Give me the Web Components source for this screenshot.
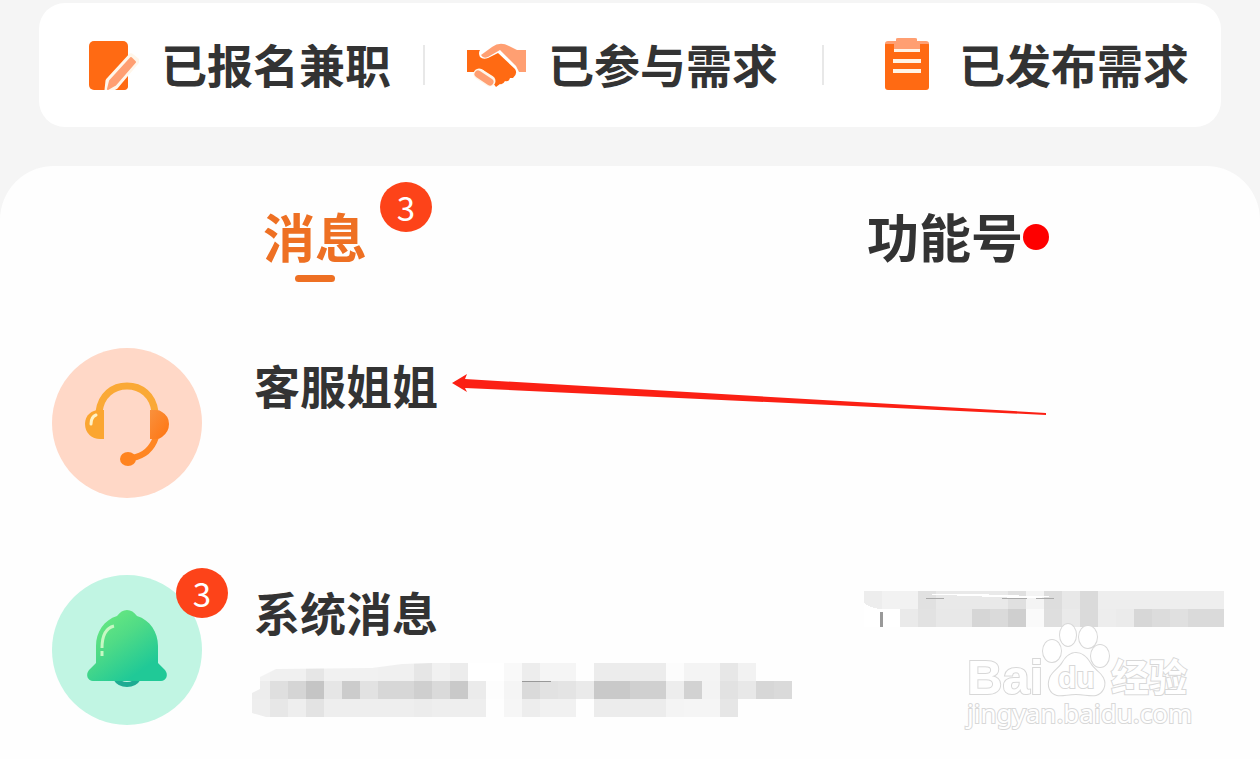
<!DOCTYPE html>
<html lang="zh-CN">
<head>
<meta charset="utf-8">
<meta name="viewport" content="width=device-width, initial-scale=1">
<title>消息</title>
<style>
  body { margin: 0; background: #f5f5f5; color: #333; font-family: "Noto Sans CJK SC", sans-serif; }
</style>
</head>
<body>
<message-page></message-page>

<script>
const define = (name, html, setup) => customElements.define(name, class extends HTMLElement {
  constructor() {
    super();
    const t = document.createElement('template');
    t.innerHTML = html;
    this.attachShadow({ mode: 'open' }).append(t.content.cloneNode(true));
  }
  connectedCallback() { if (setup) setup(this, this.shadowRoot); }
});

const ICONS = {
  apply: `<svg viewBox="-3 0 60 60"><rect x="7" y="6" width="39" height="49" rx="5" fill="#ff6a13"/>
    <path d="M49 22 54 26 33 51 26 55 27 46Z" fill="#fff6ea" stroke="#fff6ea" stroke-width="7" stroke-linejoin="round"/>
    <path d="M20 55H44L40 60H18Z" fill="#fff"/><path d="M36 55 46 43V51Q46 55 42 55Z" fill="#ff6a13"/>
    <path d="M49 23 53 27 33 50 26 54 28 46Z" fill="#ff9f72" stroke="#ff9f72" stroke-width="2" stroke-linejoin="round"/></svg>`,
  join: `<svg viewBox="0 0 60 60"><path d="M15 20 26 12Q34 6 43 11L51 15H60V37H53L50 31 34 15 22 22Q17 24 15 20Z" fill="#ff9f72"/>
    <path d="M1 15H14Q12 18 14 22 17 25 22 23L32 18 49 34Q52 39 47 43L44 43Q43 47 39 46 37 50 34 49L30 52 27 48 26 43 17 35Q12 33 9 37H1Z" fill="#ff6a13"/>
    <path d="M13 39 24 46" fill="none" stroke="#fff6ea" stroke-width="11" stroke-linecap="round"/>
    <path d="M12 39 24 47" fill="none" stroke="#ff9f72" stroke-width="7" stroke-linecap="round"/></svg>`,
  publish: `<svg viewBox="0 0 60 60"><rect x="8" y="7" width="44" height="48" rx="3" fill="#ff6a13"/>
    <path d="M17 14H43V17H17ZM16 24H44V28H16ZM16 34H44V38H16Z" fill="#fff4e8"/>
    <path d="M8 9Q8 6 11 6H19V4Q19 3 21 3H38Q40 3 40 4V6H49Q52 6 52 9H43V14H17V9Z" fill="#ff9f72"/></svg>`,
  service: `<svg viewBox="0 0 150 150"><defs><linearGradient id="o" x1="0" x2="1" y1="0" y2="1"><stop offset="0" stop-color="#f9913d"/><stop offset="1" stop-color="#ff7410"/></linearGradient></defs>
    <circle cx="75" cy="75" r="75" fill="#ffd8c7"/>
    <path d="M47 64C49 47 61 38 75 38S101 47 103 64" fill="none" stroke="#faa936" stroke-width="7"/>
    <path d="M104 89Q98 107 80 110" fill="none" stroke="#ff8623" stroke-width="6"/>
    <path d="M52 62V91H48C40 91 33 85 33 76S40 62 47 62Z" fill="#fba631"/>
    <path d="M98 62V91H104Q108 91 110 89 117 84 117 76T110 64Q108 62 104 62Z" fill="url(#o)"/>
    <ellipse cx="76" cy="111" rx="8" ry="7" fill="#ff8420"/>
    <path d="M39 76Q39 69 44 67" fill="none" stroke="#fff2c6" stroke-width="3" stroke-linecap="round"/></svg>`,
  system: `<svg viewBox="0 0 150 150"><defs><linearGradient id="g" x1=".25" x2=".75" y1=".15" y2=".8"><stop offset="0" stop-color="#62e582"/><stop offset=".35" stop-color="#50db86"/><stop offset="1" stop-color="#20c997"/></linearGradient></defs>
    <circle cx="75" cy="75" r="75" fill="#c1f5e3"/>
    <path d="M64 104A12 9 0 0 0 86 104" fill="none" stroke="#1eab92" stroke-width="5"/>
    <path d="M75 35C79 35 82 37 85 41C98 45 106 57 106 71V88L113 95C117 100 114 106 109 106H41C36 106 33 100 37 95L44 88V71C44 57 52 45 65 41C68 37 71 35 75 35Z" fill="url(#g)"/>
    <path d="M62 51Q50 54 50 73M50 76V81" fill="none" stroke="#c7f8c3" stroke-width="3"/></svg>`
};

/* A censored strip: each cell is [columns, grey level], each column 18px wide. */
const MOSAICS = {
  preview: { w: 540, h: 54, clip: 'M8 14 24 6 120 5 150 1 180 0H540V54H14L0 50V30L8 26Z',
    rows: [
      [[1,'f3'],[2,'f0'],[1,'e6'],[3,'f1'],[2,'f0'],[1,'e6'],[1,'f1'],[1,'ec'],[1,'ff'],[1,'ff'],[1,'f9'],[1,'ed'],[2,'f5'],[1,'fe'],[4,'ec'],[1,'fc'],[2,'f4'],[1,'e7'],[1,'f2']],
      [[1,'ed'],[1,'df'],[1,'d5'],[1,'c5'],[1,'e6'],[1,'cc'],[1,'e2'],[2,'d7'],[1,'cf'],[1,'da'],[1,'c9'],[1,'eb'],[1,'fd'],[1,'f5'],[1,'da'],[1,'e2'],[1,'e4'],[1,'ea'],[2,'c9'],[2,'d0'],[1,'ed'],[1,'d2'],[1,'f3'],[1,'e2'],[1,'e8'],[1,'d7'],[1,'da']],
      [[1,'ee'],[1,'e7'],[1,'ee'],[1,'e3'],[5,'ee'],[1,'ec'],[3,'ee'],[1,'fe'],[1,'f6'],[1,'ed'],[2,'f1'],[1,'fe'],[4,'ec'],[1,'f4'],[2,'f5'],[1,'e6']]
    ], extra: '<path d="M270 18H299" stroke="#999"/>' },
  time: { w: 360, h: 36, clip: 'M0 0H360V36H0Z',
    rows: [
      [[1,'ed'],[2,'f2'],[1,'e1'],[4,'e9'],[1,'e0'],[1,'f4'],[1,'dd'],[1,'e8'],[1,'da'],[7,'ee']],
      [[2,'ff'],[1,'ea'],[1,'e2'],[2,'e8'],[1,'d6'],[1,'da'],[1,'cf'],[1,'fa'],[1,'de'],[1,'ea'],[1,'da'],[1,'ed'],[1,'eb'],[1,'d7'],[1,'dc'],[1,'e0'],[2,'da']]
    ], extra: '<path d="M0 12Q6 17 16 18H0Z" fill="#fff"/><path d="M55 3 110 3 200 6 155 7Z" fill="#fff"/><path d="M62 7H80M138 7H163M172 7H190" stroke="#aaa"/><path d="M17 21V36" stroke="#999" stroke-width="3"/>' }
};

define('app-icon', `<style>:host{display:block;width:60px;height:60px;flex:none}svg{display:block;width:100%;height:100%}</style>`,
  (el, root) => { root.innerHTML += ICONS[el.getAttribute('name')]; });

define('mosaic-strip', `<style>:host{display:block}svg{display:block}</style>`, (el, root) => {
  const m = MOSAICS[el.getAttribute('name')];
  let s = '';
  m.rows.forEach((row, y) => {
    let x = 0;
    for (const [n, c] of row) {
      s += `<rect x="${x}" y="${y * 18}" width="${n * 18}" height="18" fill="#${c}${c}${c}"/>`;
      x += n * 18;
    }
  });
  root.innerHTML += `<svg width="${m.w}" height="${m.h}" shape-rendering="crispEdges" aria-hidden="true"><clipPath id="c"><path d="${m.clip}"/></clipPath><g clip-path="url(#c)">${s}</g>${m.extra}</svg>`;
});

define('count-badge', `<style>
  :host{display:flex;align-items:center;justify-content:center;width:52px;height:50px;border-radius:50%;background:#fd4319;color:#fff;font:400 33px/50px "Noto Sans CJK SC",sans-serif}
</style><slot></slot>`);

define('quick-link', `<style>
  :host{display:block}
  a{display:flex;align-items:center;justify-content:flex-end;gap:22px;height:100%;color:inherit;text-decoration:none;font-size:46px;line-height:60px;font-weight:700;white-space:nowrap}
  span{padding-bottom:4px}
</style><a href="#"><slot name="icon"></slot><span><slot></slot></span></a>`);

define('quick-bar', `<style>
  :host{display:grid;grid-template-columns:386fr 399fr 397fr;align-items:center;margin:3px 39px 39px;height:124px;background:#fff;border-radius:26px}
  ::slotted(*){box-sizing:border-box;height:40px;padding-right:32px}
  ::slotted(:nth-child(2)){padding-right:44px}
  ::slotted(:not(:last-child)){border-right:2px solid #e8e8e8}
</style><slot></slot>`);

define('tab-item', `<style>
  :host{display:flex;justify-content:center}
  button{all:unset;display:flex;flex-direction:column;align-items:center;gap:7px;position:relative;cursor:pointer;font-size:52px;line-height:64px;font-weight:700}
  button::after{content:"";width:40px;height:7px;border-radius:4px}
  :host([active]) button{color:#ee7023}
  :host([active]) button::after{background:#ee7023}
  ::slotted([slot=badge]){position:absolute;left:100%;top:-22px;margin-left:13px}
  .dot{display:none;position:absolute;left:100%;top:20px;width:26px;height:26px;border-radius:50%;background:#fe0000}
  :host([dot]) .dot{display:block}
</style><button type="button" role="tab"><slot></slot><slot name="badge"></slot><span class="dot"></span></button>`,
  (el, root) => root.querySelector('button').setAttribute('aria-selected', el.hasAttribute('active')));

define('message-row', `<style>
  :host{display:block}
  a{display:grid;grid-template-columns:150px 1fr auto;column-gap:50px;color:inherit;text-decoration:none}
  .avatar{position:relative;height:150px}
  .avatar ::slotted(app-icon){width:150px;height:150px}
  .avatar ::slotted(count-badge){position:absolute;right:-26px;top:-7px}
  .body{position:relative;display:flex;flex-direction:column;gap:16px}
  .name{font-size:46px;line-height:72px;font-weight:700;padding-left:2px}
  .time{padding-top:16px}
</style><a href="#"><div class="avatar"><slot name="icon"></slot><slot name="badge"></slot></div>
<div class="body"><div class="name"><slot></slot></div><slot name="preview"></slot></div>
<div class="time"><slot name="time"></slot></div></a>`);

define('pointer-arrow', `<style>:host{position:absolute;left:200px;top:26px}svg{display:block}</style>
<svg width="594" height="42" aria-hidden="true"><path d="M0 9 15 0 13 5 594 39V41L13 14 15 18Z" fill="#fb2014"/></svg>`);

define('site-watermark', `<style>
  :host{display:block;position:absolute;right:60px;top:454px}
  svg{display:block}
  g{fill:#fff;stroke:#d8d8d8;stroke-width:2;paint-order:stroke}
</style>
<svg width="240" height="120"><g>
  <text x="7" y="74" font-family="Liberation Sans" font-weight="700" font-size="49">Bai</text>
  <path d="M116 74C108 74 102 76 97 75C90 73 87 66 90 58C93 51 99 49 103 42C107 35 112 33 116 33C121 33 126 36 130 43C134 50 140 52 143 58C147 66 142 73 136 75C130 76 124 74 116 74Z"/>
  <ellipse cx="92" cy="31" rx="9" ry="11"/><ellipse cx="108" cy="15" rx="8" ry="11"/>
  <ellipse cx="128" cy="17" rx="9" ry="11"/><ellipse cx="140" cy="36" rx="9" ry="11"/>
  <text x="98" y="68" font-family="Liberation Sans" font-weight="700" font-size="30">du</text>
  <text x="151" y="71" font-family="Noto Sans CJK SC" font-weight="700" font-size="38">经验</text>
  <text x="7" y="103" font-family="Noto Sans" font-weight="400" font-size="26">jingyan.baidu.com</text>
</g></svg>`);

define('message-page', `<style>
  :host{display:flex;flex-direction:column;min-height:100vh;overflow:hidden}
  main{position:relative;flex:1;background:#fefefe;border-radius:54px 54px 0 0}
  .tabs{display:grid;grid-template-columns:1fr 1fr;padding-top:38px}
  .list{display:grid;gap:77px;padding:66px 36px 34px 52px}
</style>
<quick-bar>
  <quick-link><app-icon slot="icon" name="apply"></app-icon>已报名兼职</quick-link>
  <quick-link><app-icon slot="icon" name="join"></app-icon>已参与需求</quick-link>
  <quick-link><app-icon slot="icon" name="publish"></app-icon>已发布需求</quick-link>
</quick-bar>
<main>
  <div class="tabs" role="tablist">
    <tab-item active>消息<count-badge slot="badge">3</count-badge></tab-item>
    <tab-item dot>功能号</tab-item>
  </div>
  <div class="list">
    <message-row><app-icon slot="icon" name="service"></app-icon>客服姐姐<pointer-arrow slot="preview"></pointer-arrow></message-row>
    <message-row><app-icon slot="icon" name="system"></app-icon><count-badge slot="badge">3</count-badge>系统消息<mosaic-strip slot="preview" name="preview"></mosaic-strip><mosaic-strip slot="time" name="time"></mosaic-strip></message-row>
  </div>
  <site-watermark></site-watermark>
</main>`);
</script>
</body>
</html>
